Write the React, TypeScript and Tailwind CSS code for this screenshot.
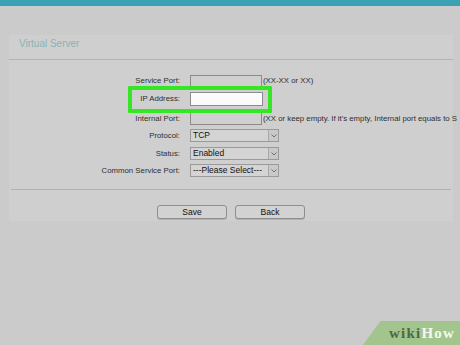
import React from "react";

function Chevron() {
  return (
    <div className="w-[10px] h-full shrink-0 border-l border-[#a8a8a8] bg-[#c9c9c9] flex items-center justify-center">
      <svg width="6" height="4" viewBox="0 0 6 4">
        <path d="M0.5 0.5 L3 3 L5.5 0.5" fill="none" stroke="#666" strokeWidth="0.9" />
      </svg>
    </div>
  );
}

function Select({ value }: { value: string }) {
  return (
    <div className="w-[89px] h-[13px] shrink-0 border border-[#9a9a9a] bg-[#d4d4d4] flex items-center">
      <div className="flex-1 pl-[2px] text-[8.5px] leading-none text-[#111] whitespace-nowrap">{value}</div>
      <Chevron />
    </div>
  );
}

export default function App() {
  const label = "w-[171px] shrink-0 text-right text-[7.8px] leading-none text-[#2e2e2e]";
  return (
    <div className="relative w-[460px] h-[345px] overflow-hidden bg-[#cbcbcb] font-['Liberation_Sans',Arial,sans-serif]">
      <div className="h-[6px] bg-[#3aa2b2]" />
      <div className="mt-[29px] ml-[9px] w-[444px] bg-[#cfcfcf] pb-[2px]">
        <div className="h-[25px] pt-[4px] pl-[10px] border-b border-[#b4b4b4] text-[10px] leading-none text-[#8ab3b3]">
          Virtual Server
        </div>
        <div className="pt-[15px] flex flex-col">
          <div className="flex items-center h-[12px]">
            <div className={label}>Service Port:</div>
            <div className="ml-[10px] shrink-0 w-[72px] h-[12px] border border-[#8c8c8c] bg-[#d0d0d0]" />
            <div className="ml-[1px] text-[7.8px] leading-none text-[#2e2e2e] whitespace-nowrap">(XX-XX or XX)</div>
          </div>
          <div className="flex items-center h-[14px] mt-[5px]">
            <div className={label}>IP Address:</div>
            <div className="ml-[10px] shrink-0 w-[73px] h-[14px] border border-[#8c8c8c] bg-[#fbfbfb]" />
          </div>
          <div className="flex items-center h-[13px] mt-[6px]">
            <div className={label}>Internal Port:</div>
            <div className="ml-[10px] shrink-0 w-[72px] h-[13px] border border-[#8c8c8c] bg-[#d0d0d0]" />
            <div className="ml-[1px] text-[7.8px] leading-none text-[#2e2e2e] whitespace-nowrap">
              (XX or keep empty. If it's empty, Internal port equals to S
            </div>
          </div>
          <div className="flex items-center h-[13px] mt-[4px]">
            <div className={label}>Protocol:</div>
            <div className="ml-[10px] shrink-0">
              <Select value="TCP" />
            </div>
          </div>
          <div className="flex items-center h-[13px] mt-[5px]">
            <div className={label}>Status:</div>
            <div className="ml-[10px] shrink-0">
              <Select value="Enabled" />
            </div>
          </div>
          <div className="flex items-center h-[13px] mt-[4px]">
            <div className={label}>Common Service Port:</div>
            <div className="ml-[10px] shrink-0">
              <Select value="---Please Select---" />
            </div>
          </div>
        </div>
        <div className="mt-[12px] mx-[2px] border-t border-[#b2b2b2]" />
        <div className="mt-[15px] flex justify-center gap-[8px]">
          <div className="w-[70px] h-[14px] rounded-[3px] border border-[#8e8e8e] bg-[#d2d2d2] flex items-center justify-center text-[8.5px] leading-none text-[#111] shadow-[0_1px_0_#b0b0b0]">
            Save
          </div>
          <div className="w-[70px] h-[14px] rounded-[3px] border border-[#8e8e8e] bg-[#d2d2d2] flex items-center justify-center text-[8.5px] leading-none text-[#111] shadow-[0_1px_0_#b0b0b0]">
            Back
          </div>
        </div>
      </div>

      <div className="absolute left-[128px] top-[86px] w-[144px] h-[27px] border-[4px] border-[#35e627] rounded-[1px]" />

      <div className="absolute left-[363px] top-[321px] w-[97px] h-[24px] bg-[#a2c48d] [clip-path:polygon(18%_0,100%_0,100%_100%,0_100%)] flex items-center justify-end pr-[5px]">
        <span className="font-['Liberation_Serif',serif] font-bold text-[15px] leading-none tracking-[1.2px] text-[#4d6a45]">wiki</span>
        <span className="font-['Liberation_Serif',serif] font-bold text-[15px] leading-none tracking-[1.2px] text-[#f4f8f0]">How</span>
      </div>
    </div>
  );
}
